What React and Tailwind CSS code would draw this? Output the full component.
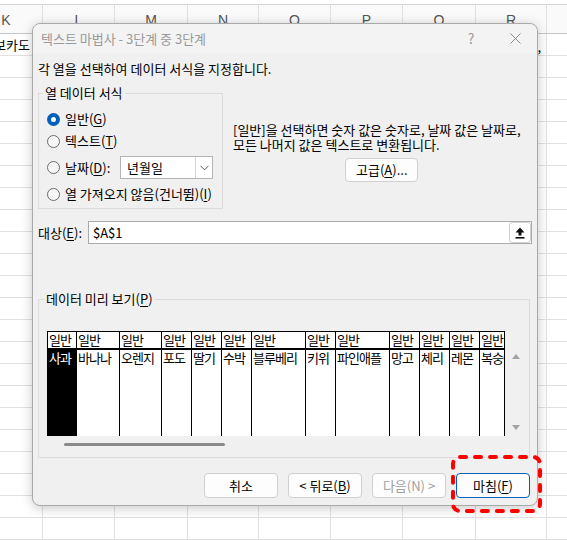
import React from 'react'

const SHEET_COLS = [
  { l: 'K', w: 73 }, { l: 'L', w: 72 }, { l: 'M', w: 73 }, { l: 'N', w: 71 },
  { l: 'O', w: 72 }, { l: 'P', w: 72 }, { l: 'Q', w: 73 }, { l: 'R', w: 71 }, { l: 'S', w: 72 },
]

const PREVIEW = [
  { t: '사과', w: 29 }, { t: '바나나', w: 43 }, { t: '오렌지', w: 42 }, { t: '포도', w: 30 },
  { t: '딸기', w: 30 }, { t: '수박', w: 30 }, { t: '블루베리', w: 54 }, { t: '키위', w: 30 },
  { t: '파인애플', w: 54 }, { t: '망고', w: 30 }, { t: '체리', w: 30 }, { t: '레몬', w: 30 },
  { t: '복숭아', w: 42 },
]

// underlined accelerator key
const U = ({ children }) => <span className="underline underline-offset-2">{children}</span>

const Radio = ({ checked }) =>
  checked ? (
    <span className="w-[13px] h-[13px] rounded-full bg-[#005fb8] flex items-center justify-center shrink-0">
      <span className="w-[5px] h-[5px] rounded-full bg-white" />
    </span>
  ) : (
    <span className="w-[13px] h-[13px] rounded-full border border-[#6b6b6b] bg-[#f6f6f6] shrink-0" />
  )

const Btn = ({ children, primary, disabled }) => (
  <div
    className={`w-[74px] h-[25px] flex items-center justify-center rounded-[4px] border bg-[#fdfdfd] ${primary ? 'border-[#005fb8]' : 'border-[#d0d0d0]'
      } ${disabled ? 'text-[#a0a0a0]' : 'text-black'}`}
  >
    {children}
  </div>
)

const App = () => {
  return (
    <div className="relative w-[567px] h-[540px] overflow-hidden bg-white font-['Noto_Sans_CJK_KR',sans-serif]">
      {/* Excel sheet in background */}
      <div className="h-[5px] bg-white border-b border-[#d4d4d4]" />
      <div className="flex h-[29px] bg-[#fafafa] border-b border-[#c6c6c6] ml-[-30px]">
        {SHEET_COLS.map((c) => (
          <div
            key={c.l}
            style={{ width: c.w }}
            className="shrink-0 border-r border-[#e0e0e0] flex items-center justify-center pt-[3px] text-[14px] text-[#555] font-['Liberation_Sans',sans-serif]"
          >
            {c.l}
          </div>
        ))}
      </div>
      {Array.from({ length: 23 }).map((_, r) => (
        <div key={r} className="flex h-[22px] border-b border-[#e1e1e1] ml-[-30px]">
          {SHEET_COLS.map((c, i) => (
            <div
              key={c.l}
              style={{ width: c.w }}
              className="shrink-0 border-r border-[#e1e1e1] flex items-center text-[13px] text-black overflow-visible"
            >
              {r === 0 && i === 0 && <span className="ml-[12px] whitespace-nowrap">아보카도</span>}
              {r === 0 && i === 7 && <span className="ml-auto mr-[5px] mt-[4px]">,</span>}
            </div>
          ))}
        </div>
      ))}

      {/* Dialog window */}
      <div className="absolute left-[32px] top-[23px] w-[506px] rounded-[8px] border border-[#a9a9a9] bg-[#f0f0f0] shadow-[0_2px_12px_rgba(0,0,0,0.22)] text-[13px] text-black">
        {/* Title bar */}
        <div className="h-[29px] flex items-center pl-[8px] text-[#999] rounded-t-[8px] bg-[#f3f3f3]">
          <span>텍스트 마법사 - 3단계 중 3단계</span>
          <span className="ml-auto w-[44px] flex justify-center text-[14px] text-[#9a9a9a]">?</span>
          <span className="w-[44px] flex justify-center">
            <svg width="11" height="11" viewBox="0 0 11 11">
              <path d="M0.5 0.5 L10.5 10.5 M10.5 0.5 L0.5 10.5" stroke="#8a8a8a" strokeWidth="1" />
            </svg>
          </span>
        </div>

        <div className="px-[5px] pb-[7px]">
          <p className="mt-[8px] leading-[16px]">각 열을 선택하여 데이터 서식을 지정합니다.</p>

          <div className="flex mt-[8px]">
            {/* 열 데이터 서식 */}
            <fieldset className="w-[185px] border border-[#dcdcdc] shrink-0">
              <legend className="ml-[4px] px-[2px] leading-[16px]">열 데이터 서식</legend>
              <div className="pl-[8px] pb-[5px]">
                <div className="mt-[9px] h-[18px] flex items-center gap-[5px]">
                  <Radio checked />
                  <span>일반(<U>G</U>)</span>
                </div>
                <div className="mt-[4px] h-[18px] flex items-center gap-[5px]">
                  <Radio />
                  <span>텍스트(<U>T</U>)</span>
                </div>
                <div className="mt-[6px] h-[23px] flex items-center">
                  <Radio />
                  <span className="ml-[5px] w-[55px] whitespace-nowrap">날짜(<U>D</U>):</span>
                  <div className="w-[93px] h-[23px] flex border border-[#b4b4b4] bg-white">
                    <span className="flex-1 flex items-center pl-[6px]">년월일</span>
                    <span className="w-[17px] border-l border-[#d4d4d4] flex items-center justify-center">
                      <svg width="9" height="6" viewBox="0 0 9 6">
                        <path d="M0.5 0.8 L4.5 4.8 L8.5 0.8" fill="none" stroke="#555" strokeWidth="1" />
                      </svg>
                    </span>
                  </div>
                </div>
                <div className="mt-[6px] h-[18px] flex items-center gap-[5px] whitespace-nowrap">
                  <Radio />
                  <span>열 가져오지 않음(건너뜀)(<U>I</U>)</span>
                </div>
              </div>
            </fieldset>

            {/* description */}
            <div className="ml-[10px] mt-[37px] flex flex-col items-center">
              <div className="leading-[15px] whitespace-nowrap">
                <p>[일반]을 선택하면 숫자 값은 숫자로, 날짜 값은 날짜로,</p>
                <p>모든 나머지 값은 텍스트로 변환됩니다.</p>
              </div>
              <div className="mt-[6px] ml-[10px] w-[73px] h-[24px] flex items-center justify-center rounded-[4px] border border-[#d0d0d0] bg-[#fdfdfd]">
                고급(<U>A</U>)...
              </div>
            </div>
          </div>

          {/* 대상 */}
          <div className="mt-[12px] flex items-center">
            <span className="w-[50px] whitespace-nowrap">대상(<U>E</U>):</span>
            <div className="flex-1 h-[23px] flex items-center border border-[#ababab] bg-white">
              <span className="flex-1 pl-[4px]">$A$1</span>
              <span className="w-[22px] h-[21px] rounded-[3px] border border-[#d0d0d0] bg-white flex items-center justify-center">
                <svg width="10" height="12" viewBox="0 0 10 12">
                  <path d="M5 0.5 L9.5 5.5 H6.5 V8.5 H3.5 V5.5 H0.5 Z" fill="#111" />
                  <rect x="0.5" y="10" width="9" height="1.6" fill="#111" />
                </svg>
              </span>
            </div>
          </div>

          {/* 데이터 미리 보기 */}
          <fieldset className="mt-[47px] w-[492px] border border-[#dcdcdc]">
            <legend className="ml-[5px] px-[2px] leading-[16px]">데이터 미리 보기(<U>P</U>)</legend>
            <div className="pl-[8px] pb-[6px]">
              <div className="mt-[24px] flex">
                <div className="w-[458px] h-[105px] flex overflow-hidden border-r border-black">
                  {PREVIEW.map((c, i) => (
                    <div key={c.t} style={{ width: c.w }} className="shrink-0 flex flex-col border-l border-black">
                      <div className="h-[19px] border-t border-b-2 border-black bg-white pl-[1px] text-[13px] leading-[15px] tracking-[-1px] whitespace-nowrap">
                        일반
                      </div>
                      <div
                        className={`flex-1 pl-[1px] pt-[1px] text-[13px] leading-[14px] tracking-[-1px] whitespace-nowrap ${i === 0 ? 'bg-black text-white' : 'bg-white text-black'
                          }`}
                      >
                        {c.t}
                      </div>
                    </div>
                  ))}
                </div>
                {/* vertical scrollbar */}
                <div className="w-[22px] pt-[19px] flex flex-col items-center">
                  <svg width="8" height="12" viewBox="0 0 8 12">
                    <path d="M0 9 L4 4 L8 9 Z" fill="#a3a3a3" />
                  </svg>
                  <svg width="8" height="12" viewBox="0 0 8 12" className="mt-auto mb-[3px]">
                    <path d="M0 4 L4 9 L8 4 Z" fill="#a3a3a3" />
                  </svg>
                </div>
              </div>
              {/* horizontal scrollbar */}
              <div className="h-[15px] pt-[7px]">
                <div className="ml-[17px] w-[161px] h-[3px] rounded-full bg-[#8a8a8a]" />
              </div>
            </div>
          </fieldset>

          {/* buttons */}
          <div className="mt-[15px] flex justify-end gap-[10px] pr-[2px]">
            <Btn>취소</Btn>
            <Btn>&lt; 뒤로(<U>B</U>)</Btn>
            <Btn disabled>다음(N) &gt;</Btn>
            <Btn primary>마침(<U>F</U>)</Btn>
          </div>
        </div>
      </div>

      {/* red dashed annotation */}
      <svg className="absolute left-[450px] top-[454px]" width="94" height="62" viewBox="0 0 94 62">
        <rect x="3" y="3" width="87" height="54" rx="7" fill="none" stroke="#ff0000" strokeWidth="4" strokeDasharray="6 9" strokeLinecap="round" />
      </svg>
    </div>
  )
}

export default App
